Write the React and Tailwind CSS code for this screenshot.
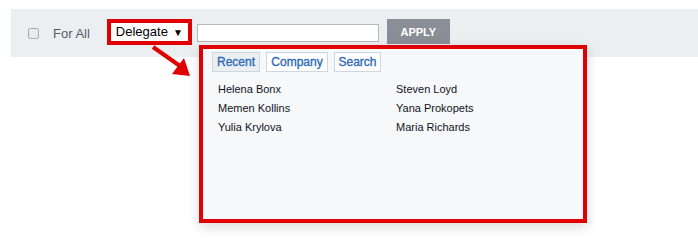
import React from "react";

const names = [
  ["Helena Bonx", "Steven Loyd"],
  ["Memen Kollins", "Yana Prokopets"],
  ["Yulia Krylova", "Maria Richards"],
];

export default function App() {
  return (
    <div className="relative w-[698px] h-[250px] bg-white font-['Liberation_Sans',Arial,sans-serif]">
      <div className="h-[9px]" />
      {/* toolbar */}
      <div className="ml-[11px] h-[48px] bg-[#eceff2] flex items-start">
        <div className="mt-[19px] ml-[17px] w-[11px] h-[11px] rounded-[2px] border border-[#a9adb2] bg-[#e9eaec]" />
        <span className="mt-[15px] ml-[14px] text-[13px] text-[#555a66]">For All</span>
        <div className="mt-[10px] ml-[17px] w-[85px] h-[26px] border-[4px] border-[#e10000] bg-white flex items-center justify-between pl-[5px] pr-[5px]">
          <span className="text-[13px] text-black">Delegate</span>
          <span className="text-[10px] text-black">▼</span>
        </div>
        <div className="mt-[15px] ml-[5px] w-[182px] h-[18px] border border-[#b8b8b8] bg-white" />
        <div className="mt-[10px] ml-[8px] w-[63px] h-[25px] pt-[2px] bg-[#898e97] flex items-center justify-center text-white text-[11px] font-bold">
          APPLY
        </div>
      </div>

      {/* arrow */}
      <svg className="absolute left-[148px] top-[42px]" width="50" height="40" viewBox="0 0 50 40">
        <line x1="5" y1="5" x2="32" y2="24" stroke="#e10000" strokeWidth="4" />
        <polygon points="24,32 36,16 42,34" fill="#e10000" />
      </svg>

      {/* popup */}
      <div className="absolute left-[199px] top-[45px] w-[388px] h-[178px] border-[4px] border-[#e10000] bg-[#f7f8fa] shadow-[0_4px_12px_rgba(0,0,0,0.15)]">
        <div className="flex gap-[6px] ml-[9px] mt-[3px]">
          <div className="h-[20px] w-[48px] border border-[#cfd6de] bg-[#eceff2] flex items-center justify-center text-[12px] text-[#2d6bb5] [-webkit-text-stroke:0.35px_#2d6bb5]">Recent</div>
          <div className="h-[20px] w-[62px] border border-[#cfd6de] bg-white flex items-center justify-center text-[12px] text-[#2d6bb5] [-webkit-text-stroke:0.35px_#2d6bb5]">Company</div>
          <div className="h-[20px] w-[47px] border border-[#cfd6de] bg-white flex items-center justify-center text-[12px] text-[#2d6bb5] [-webkit-text-stroke:0.35px_#2d6bb5]">Search</div>
        </div>
        <div className="mt-[11px] ml-[15px] flex flex-col gap-[6px]">
          {names.map(([a, b]) => (
            <div key={a} className="flex text-[11px] text-[#10131a] leading-[13px]">
              <span className="w-[178px]">{a}</span>
              <span>{b}</span>
            </div>
          ))}
        </div>
      </div>
    </div>
  );
}
